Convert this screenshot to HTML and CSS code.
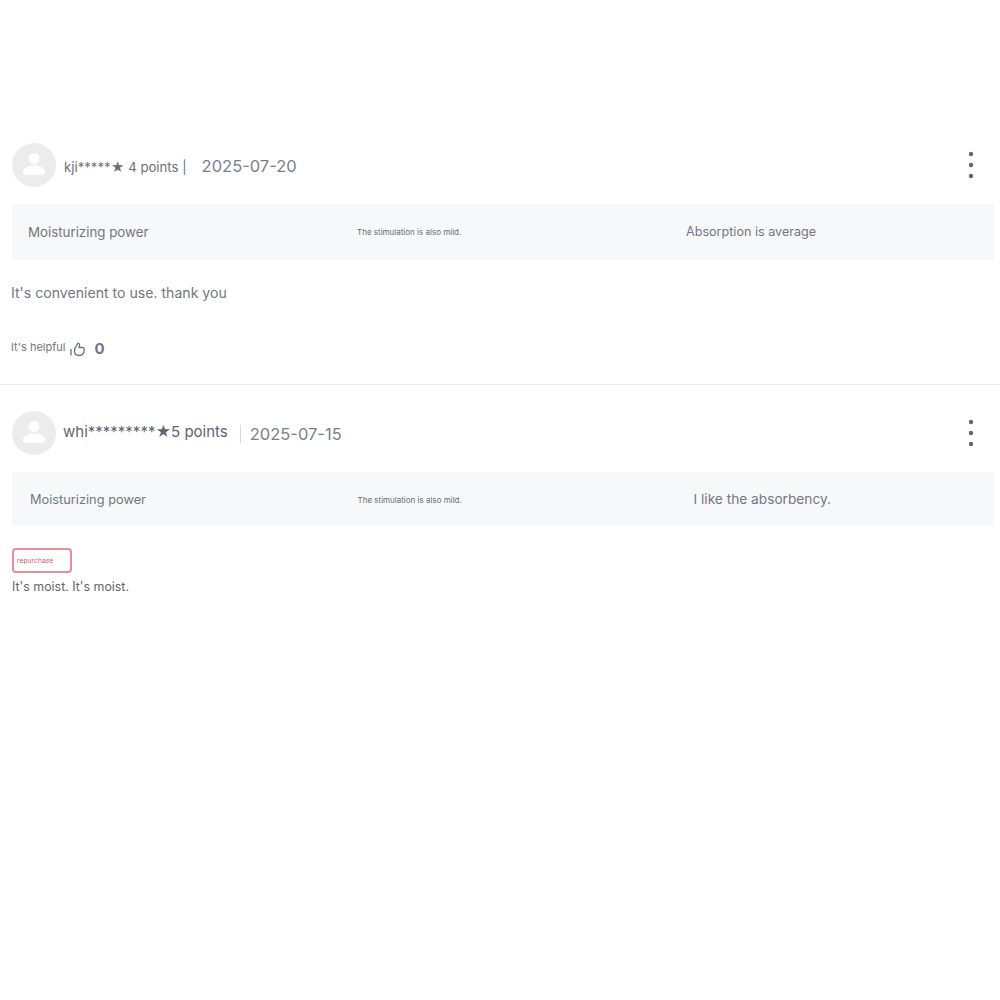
FILE: index.html
```html
<!DOCTYPE html>
<html lang="en">
<head>
    <meta charset="UTF-8">
    <meta name="viewport" content="width=device-width, initial-scale=1.0">
    <title>Reviews</title>
    <link rel="stylesheet" href="styles.css">
</head>
<body>
    <div class="review-list">
        <div class="review review-first">
            <div class="review-head">
                <svg class="avatar" viewBox="0 0 44 44"><circle cx="22" cy="22" r="22" fill="#ececec"/><circle cx="22" cy="15.500" r="5.500" fill="#fff"/><path d="M11 29c0-4 5-6.500 11-6.500S33 25 33 29c0 1.800-1 2.800-3 2.800H14c-2 0-3-1-3-2.800z" fill="#fff"/></svg>
                <span class="user">kji*****★ 4 points |</span>
                <span class="date">2025-07-20</span>
                <svg class="more" viewBox="0 0 6 28"><circle cx="3" cy="3" r="2.200"/><circle cx="3" cy="14" r="2.200"/><circle cx="3" cy="25" r="2.200"/></svg>
            </div>
            <div class="summary">
                <span class="cell">Moisturizing power</span>
                <span class="cell cell-tiny">The stimulation is also mild.</span>
                <span class="cell cell-last">Absorption is average</span>
            </div>
            <p class="body-text">It's convenient to use. thank you</p>
            <div class="helpful">
                <span class="helpful-label">It's helpful</span>
                <svg class="thumb" viewBox="0 0 16 16"><path d="M1 8v6.500M4.500 8 8 2.200c1.300.2 1.800 1.200 1.500 2.300L9 6.500h3.500c1.300 0 2 1 1.800 2.200-.2 3.200-2 5.800-5.300 5.800-2.800 0-4.500-1.700-4.500-4.200 0-.9.200-1.700.5-2.300z" fill="none" stroke="#6b7280" stroke-width="1.300" stroke-linejoin="round"/></svg>
                <span class="helpful-count">0</span>
            </div>
        </div>

        <div class="review review-second">
            <div class="review-head">
                <svg class="avatar" viewBox="0 0 44 44"><circle cx="22" cy="22" r="22" fill="#ececec"/><circle cx="22" cy="15.500" r="5.500" fill="#fff"/><path d="M11 29c0-4 5-6.500 11-6.500S33 25 33 29c0 1.800-1 2.800-3 2.800H14c-2 0-3-1-3-2.800z" fill="#fff"/></svg>
                <span class="user user-big">whi*********★5 points</span>
                <span class="date date-split">2025-07-15</span>
                <svg class="more" viewBox="0 0 6 28"><circle cx="3" cy="3" r="2.200"/><circle cx="3" cy="14" r="2.200"/><circle cx="3" cy="25" r="2.200"/></svg>
            </div>
            <div class="summary summary-short">
                <span class="cell cell-small">Moisturizing power</span>
                <span class="cell cell-tiny cell-tiny-low">The stimulation is also mild.</span>
                <span class="cell cell-big">I like the absorbency.</span>
            </div>
            <span class="tag">repurchase</span>
            <p class="body-small">It's moist. It's moist.</p>
        </div>
    </div>
</body>
</html>
```

FILE: styles.css
```css
* {
    margin: 0;
    padding: 0;
    box-sizing: border-box;
}

body {
    font-family: Inter, 'Noto Sans', sans-serif;
    color: #727780;
    background-color: #fff;
}

.review-list {
    padding-top: 143px;
}

.review {
    padding: 0 6px 0 12px;
}

.review-first {
    height: 242px;
    border-bottom: 1px solid #ebecee;
}

.review-second {
    padding-top: 26px;
}

.review-head {
    display: flex;
    align-items: center;
    height: 44px;
}

.avatar {
    width: 44px;
    height: 44px;
    flex: none;
}

.user {
    margin-left: 8px;
    font-size: 13.200px;
    margin-top: 3px;
    color: #6b7078;
}

.user-big {
    margin-left: 7px;
    font-size: 15px;
    margin-top: -3px;
    color: #5f6670;
}

.date {
    margin-left: 15px;
    font-size: 16.500px;
    margin-top: 2px;
    color: #7a808a;
}

.date-split {
    margin-left: 12px;
    padding-left: 9px;
    border-left: 1px solid #d5d7da;
    line-height: 18px;
    margin-top: 1px;
}

.more {
    width: 6px;
    height: 28px;
    margin-left: auto;
    margin-right: 20px;
    margin-top: -1px;
    fill: #62666c;
}

.summary {
    display: grid;
    grid-template-columns: 329px 329px 1fr;
    align-items: center;
    height: 56px;
    margin-top: 17px;
    padding-left: 16px;
    padding-bottom: 1px;
    background-color: #f7f8fa;
    font-size: 13.300px;
}

.summary-short {
    height: 54px;
    padding-left: 18px;
    padding-bottom: 0;
    grid-template-columns: 327.500px 336px 1fr;
}

.cell {
    white-space: nowrap;
}

.cell-small {
    font-size: 12.800px;
}

.cell-tiny {
    font-size: 8px;
    color: #666b73;
}

.cell-tiny-low {
    padding-top: 2px;
}

.cell-last {
    font-size: 12.600px;
}

.cell-big {
    font-size: 13.700px;
}

.body-text {
    margin: 23px 0 0 -1px;
    font-size: 14.100px;
    line-height: 20px;
}

.helpful {
    display: flex;
    align-items: center;
    margin: 35px 0 0 -1px;
}

.helpful-label {
    font-size: 11px;
    margin-top: -2px;
}

.thumb {
    width: 16px;
    height: 16px;
    margin-left: 5px;
    margin-top: 2px;
}

.helpful-count {
    margin-left: 8px;
    font-size: 15px;
    font-weight: 700;
    margin-top: 1px;
}

.tag {
    display: block;
    width: 60px;
    height: 25px;
    margin-top: 22px;
    padding-left: 3px;
    border: 2px solid #e98c99;
    border-radius: 4px;
    font-size: 6.800px;
    line-height: 22px;
    color: #d9546b;
}

.body-small {
    margin-top: 5px;
    font-size: 12.400px;
    line-height: 18px;
    color: #5f6670;
}
```
